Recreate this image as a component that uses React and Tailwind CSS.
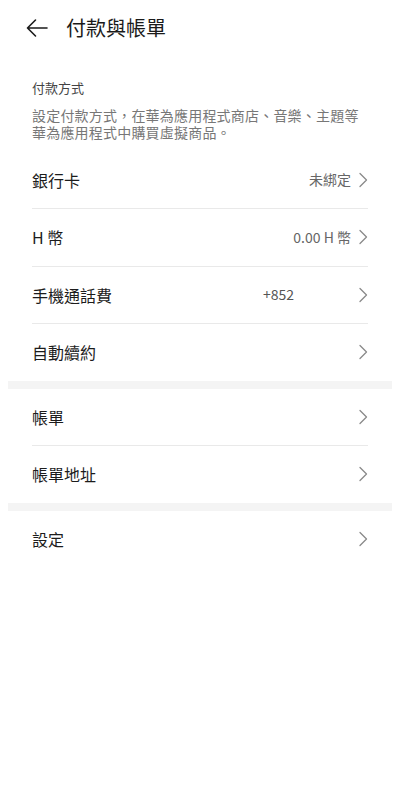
import React from "react";

const Chevron = () => (
  <svg width="10" height="16" viewBox="0 0 10 16" fill="none" className="shrink-0">
    <path d="M2 1.5 8.5 8 2 14.5" stroke="#8a8a8a" strokeWidth="1.3" strokeLinecap="round" strokeLinejoin="round" />
  </svg>
);

const Row = ({ title, value, mid, divider }) => (
  <div className="mx-8">
    <div className="h-[56.5px] flex items-center justify-between">
      <span className="text-[16px] text-[#1c1c1c]">{title}</span>
      <div className="flex items-center">
        {mid && <span className="text-[14px] text-[#555] mr-[64px]">{mid}</span>}
        {value && <span className="text-[14px] text-[#666] mr-[7px]">{value}</span>}
        <Chevron />
      </div>
    </div>
    {divider && <div className="h-px bg-[#e9e9e9]" />}
  </div>
);

const Band = () => <div className="mx-2 h-2 bg-[#f4f4f4]" />;

export default function App() {
  return (
    <div
      className="w-[400px] h-[790px] bg-white overflow-hidden"
      style={{ fontFamily: '"Noto Sans CJK TC", "Noto Sans", sans-serif' }}
    >
      <div className="h-[56px] flex items-center pl-[26px]">
        <svg width="22" height="20" viewBox="0 0 22 20" fill="none">
          <path d="M21 10H1.5M9.5 2 1.5 10l8 8" stroke="#1a1a1a" strokeWidth="1.6" strokeLinecap="round" strokeLinejoin="round" />
        </svg>
        <span className="ml-[18px] text-[20px] text-[#1a1a1a] leading-none">付款與帳單</span>
      </div>
      <div className="px-8 pt-[22px]">
        <div className="text-[13px] text-[#444] leading-[20px]">付款方式</div>
        <div className="mt-[9px] text-[14px] text-[#777] leading-[17px] tracking-[0.2px]">
          設定付款方式，在華為應用程式商店、音樂、主題等華為應用程式中購買虛擬商品。
        </div>
      </div>
      <div className="mt-[10.5px]">
        <Row title="銀行卡" value="未綁定" divider />
        <Row title="H 幣" value="0.00 H 幣" divider />
        <Row title="手機通話費" mid="+852" divider />
        <Row title="自動續約" />
      </div>
      <Band />
      <Row title="帳單" divider />
      <Row title="帳單地址" />
      <Band />
      <Row title="設定" />
    </div>
  );
}
